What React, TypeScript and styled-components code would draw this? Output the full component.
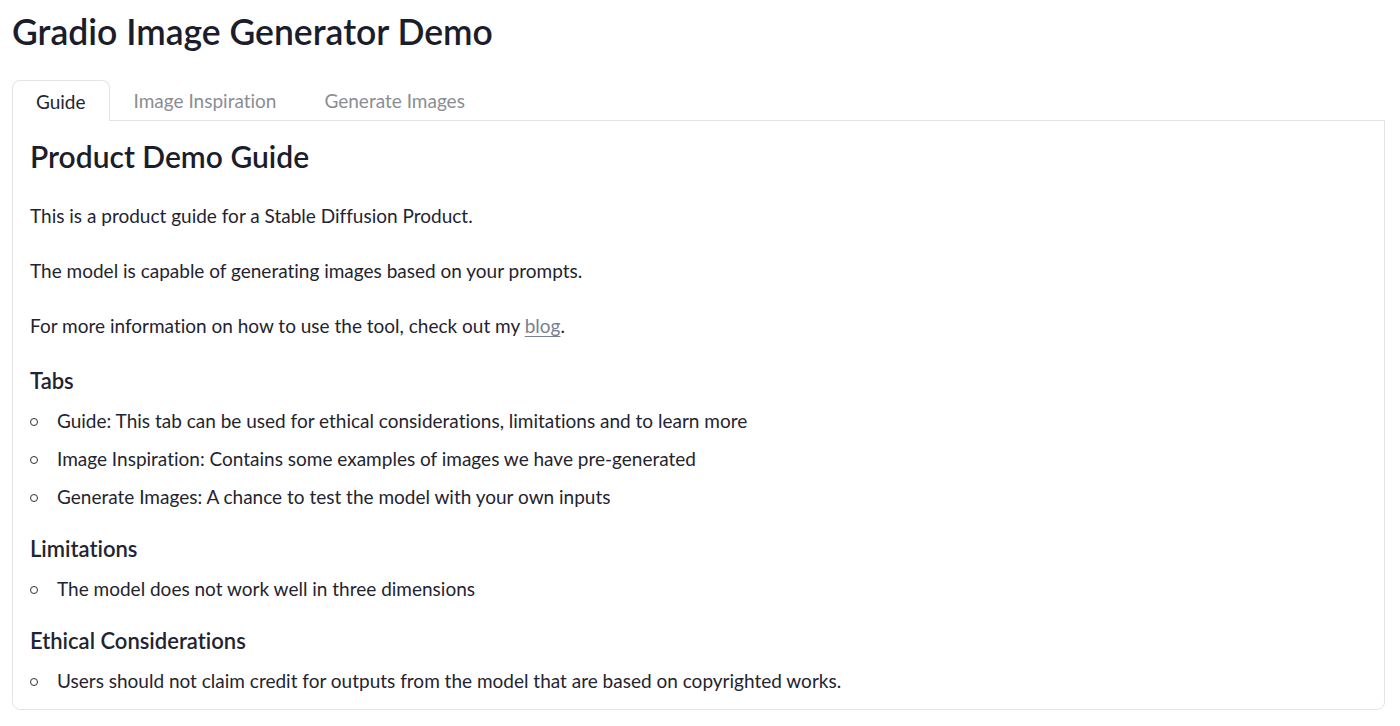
import React from "react";
import styled, { createGlobalStyle } from "styled-components";

const Global = createGlobalStyle`
  html, body { margin: 0; padding: 0; background: #ffffff; }
  body {
    font-family: "Lato", "Noto Sans", "Liberation Sans", sans-serif;
    font-variant-ligatures: none;
    color: #1f2430;
  }
  * { box-sizing: border-box; }
`;

const Page = styled.div`
  padding: 0 16px 0 12px;
  width: 1400px;
`;

const Title = styled.h1`
  margin: 0;
  height: 64px;
  line-height: 64px;
  font-size: 35.5px;
  font-weight: 600;
  color: #1c1d2b;
`;

const TabBar = styled.div`
  display: flex;
  margin-top: 16px;
  height: 40px;
  align-items: flex-start;
`;

const TabButton = styled.button<{ $active?: boolean }>`
  position: relative;
  z-index: 1;
  padding: 0 23px;
  height: ${(p) => (p.$active ? 41 : 40)}px;
  margin: 0;
  font-family: inherit;
  font-variant-ligatures: none;
  font-size: 19px;
  line-height: 39px;
  background: ${(p) => (p.$active ? "#ffffff" : "transparent")};
  cursor: pointer;
  color: ${(p) => (p.$active ? "#1f2430" : "#8a8d93")};
  border: 1px solid ${(p) => (p.$active ? "#e4e4e7" : "transparent")};
  border-bottom: none;
  border-radius: 8px 8px 0 0;
`;

const Panel = styled.div`
  border: 1px solid #e4e4e7;
  border-radius: 0 0 8px 8px;
  width: 1373px;
  padding: 15px 18px 14px 17px;
`;

const H2 = styled.h2`
  margin: 0 0 26px;
  font-size: 30px;
  line-height: 40px;
  font-weight: 600;
  color: #1c1d2b;
`;

const P = styled.p`
  margin: 0 0 27px;
  font-size: 19px;
  line-height: 28px;
  color: #1f2430;
`;

const Link = styled.a`
  color: #7b8190;
  text-decoration: underline;
  text-underline-offset: 3px;
`;

const H3 = styled.h3`
  margin: 0 0 12px;
  font-size: 22px;
  line-height: 28px;
  font-weight: 600;
  color: #1f2430;
`;

const List = styled.ul<{ $last?: boolean }>`
  list-style: none;
  margin: 0 0 ${(p) => (p.$last ? 0 : 24)}px;
  padding: 0;
`;

const Item = styled.li`
  display: flex;
  align-items: center;
  font-size: 19px;
  line-height: 28px;
  margin-bottom: 10px;
  &:last-child { margin-bottom: 0; }
  &::before {
    content: "";
    flex: none;
    width: 6px;
    height: 6px;
    margin: 1px 19px 0 0;
    border: 1.2px solid #2b2f3a;
    border-radius: 50%;
  }
`;

export default function App() {
  return (
    <>
      <Global />
      <Page>
        <Title>Gradio Image Generator Demo</Title>
        <TabBar>
          <TabButton $active>Guide</TabButton>
          <TabButton>Image Inspiration</TabButton>
          <TabButton>Generate Images</TabButton>
        </TabBar>
        <Panel>
          <H2>Product Demo Guide</H2>
          <P>This is a product guide for a Stable Diffusion Product.</P>
          <P>The model is capable of generating images based on your prompts.</P>
          <P>
            For more information on how to use the tool, check out my <Link href="#">blog</Link>.
          </P>
          <H3>Tabs</H3>
          <List>
            <Item>Guide: This tab can be used for ethical considerations, limitations and to learn more</Item>
            <Item>Image Inspiration: Contains some examples of images we have pre-generated</Item>
            <Item>Generate Images: A chance to test the model with your own inputs</Item>
          </List>
          <H3>Limitations</H3>
          <List>
            <Item>The model does not work well in three dimensions</Item>
          </List>
          <H3>Ethical Considerations</H3>
          <List $last>
            <Item>Users should not claim credit for outputs from the model that are based on copyrighted works.</Item>
          </List>
        </Panel>
      </Page>
    </>
  );
}
